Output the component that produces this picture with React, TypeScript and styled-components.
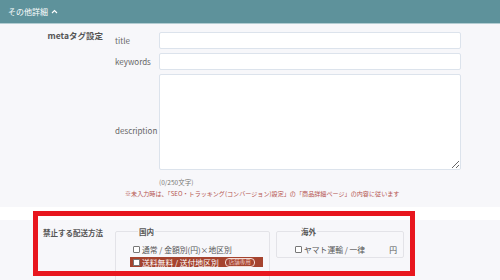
import React from "react";
import styled, { createGlobalStyle } from "styled-components";

const GlobalStyle = createGlobalStyle`
  html, body {
    margin: 0;
    padding: 0;
    background: #f7f7fa;
  }
  body {
    font-family: "Noto Sans CJK JP", "Noto Sans", sans-serif;
    color: #555;
  }
`;

const Page = styled.div`
  position: relative;
  width: 500px;
  height: 280px;
  overflow: hidden;
  background: #f7f7fa;
`;

const Header = styled.div`
  height: 23px;
  background: #5e929b;
  border-bottom: 1px solid #b3cdd2;
  display: flex;
  align-items: center;
  gap: 3px;
  padding-left: 8px;
  color: #fff;
  font-size: 8px;
`;

const Section = styled.div`
  padding: 8px 0 0;
  height: 183px;
  box-sizing: border-box;
`;

const Strip = styled.div`
  height: 13px;
  background: #fff;
`;

const FormGrid = styled.div`
  display: grid;
  grid-template-columns: 115px 44px 302px;
  row-gap: 4px;
`;

const MainLabel = styled.div<{ $rows?: number }>`
  grid-row: ${(p) => (p.$rows ? `span ${p.$rows}` : "auto")};
  text-align: right;
  padding-right: 12px;
  font-weight: bold;
  font-size: 8.5px;
  line-height: 9px;
  margin-top: -1px;
  color: #555;
`;

const SubLabel = styled.div`
  display: flex;
  align-items: center;
  font-size: 8px;
  color: #666;
  white-space: nowrap;
`;

const TextInput = styled.input`
  box-sizing: border-box;
  width: 302px;
  height: 17px;
  border: 1px solid #dce3ec;
  border-radius: 2px;
  background: #fff;
  outline: none;
`;

const DescCell = styled.div`
  display: flex;
  flex-direction: column;
`;

const TextArea = styled.textarea`
  box-sizing: border-box;
  width: 302px;
  height: 96px;
  border: 1px solid #dce3ec;
  border-radius: 2px;
  background: #fff;
  outline: none;
  resize: both;
  margin: 0;
`;

const Counter = styled.div`
  font-size: 6.5px;
  color: #777;
  line-height: 10px;
  margin-top: 7px;
`;

const Note = styled.div`
  padding-left: 125px;
  margin-top: 2px;
  font-size: 6.1px;
  line-height: 10px;
  color: #b5544f;
  white-space: nowrap;
`;

const ShipSection = styled.div`
  display: grid;
  grid-template-columns: 115px auto;
  padding-top: 7px;
`;

const ShipLabel = styled(MainLabel)`
  font-size: 7.5px;
  line-height: 12px;
  margin-top: 0;
`;

const FieldRow = styled.div`
  display: flex;
  gap: 6px;
  margin-top: 0;
`;

const Group = styled.fieldset<{ $w: number; $h: number; $pl: number }>`
  box-sizing: border-box;
  width: ${(p) => p.$w}px;
  height: ${(p) => p.$h}px;
  margin: 0;
  padding: 8px 6px 0 ${(p) => p.$pl}px;
  border: 1px solid #e3e3e8;
  border-radius: 2px;
`;

const Legend = styled.legend`
  font-size: 7.5px;
  font-weight: bold;
  color: #555;
  padding: 0 1px;
  margin-left: 5px;
  line-height: 9px;
`;

const Option = styled.label<{ $hl?: boolean }>`
  display: flex;
  align-items: center;
  gap: 2px;
  height: 10px;
  font-size: 7.8px;
  white-space: nowrap;
  color: ${(p) => (p.$hl ? "#fff" : "#555")};
  background: ${(p) => (p.$hl ? "#a5432e" : "transparent")};
  margin-left: ${(p) => (p.$hl ? "-3px" : "0")};
  padding-left: ${(p) => (p.$hl ? "3px" : "0")};
  width: ${(p) => (p.$hl ? "130px" : "auto")};
  margin-bottom: 3px;
`;

const Box = styled.span`
  display: inline-block;
  box-sizing: border-box;
  width: 7px;
  height: 7px;
  border: 1px solid #777;
  background: #fff;
  border-radius: 1px;
  flex-shrink: 0;
`;

const Badge = styled.span`
  margin-left: 4px;
  padding: 0 3px;
  height: 7px;
  line-height: 7px;
  font-size: 5.5px;
  border: 1px solid #f3dcd7;
  border-radius: 4px;
  color: #f3d5cf;
`;

const Yen = styled.span`
  margin-left: auto;
`;

const Highlight = styled.div`
  position: absolute;
  left: 33px;
  top: 211px;
  width: 382px;
  height: 65px;
  box-sizing: border-box;
  border: 5px solid #e8161e;
  pointer-events: none;
`;

const Chevron = () => (
  <svg width="7" height="5" viewBox="0 0 7 5">
    <polyline
      points="1,4 3.5,1.5 6,4"
      fill="none"
      stroke="#fff"
      strokeWidth="1.1"
    />
  </svg>
);

export default function App() {
  return (
    <Page>
      <GlobalStyle />
      <Header>
        その他詳細 <Chevron />
      </Header>
      <Section>
        <FormGrid>
          <MainLabel $rows={3}>metaタグ設定</MainLabel>
          <SubLabel>title</SubLabel>
          <TextInput />
          <SubLabel>keywords</SubLabel>
          <TextInput />
          <SubLabel>description</SubLabel>
          <DescCell>
            <TextArea />
            <Counter>(0/250文字)</Counter>
          </DescCell>
        </FormGrid>
        <Note>
          ※未入力時は、「SEO・トラッキング(コンバージョン)設定」の「商品詳細ページ」の内容に従います
        </Note>
      </Section>
      <Strip />
      <ShipSection>
        <ShipLabel>禁止する配送方法</ShipLabel>
        <FieldRow>
          <Group $w={153} $h={60} $pl={17}>
            <Legend>国内</Legend>
            <Option>
              <Box />
              通常 / 金額別(円)×地区別
            </Option>
            <Option $hl>
              <Box />
              送料無料 / 送付地区別
              <Badge>店舗専用</Badge>
            </Option>
          </Group>
          <Group $w={128} $h={31} $pl={18}>
            <Legend>海外</Legend>
            <Option>
              <Box />
              ヤマト運輸 / 一律
              <Yen>円</Yen>
            </Option>
          </Group>
        </FieldRow>
      </ShipSection>
      <Highlight />
    </Page>
  );
}
